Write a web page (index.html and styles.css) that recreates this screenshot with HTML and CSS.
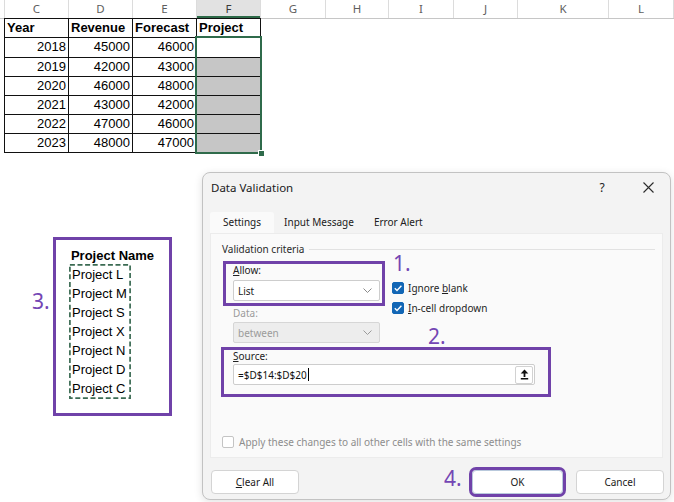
FILE: index.html
```html
<!DOCTYPE html>
<html>
<head>
<meta charset="utf-8">
<title>Data Validation</title>
<link rel="stylesheet" href="styles.css">
</head>
<body>
<div class="colheads">
  <div class="ch c0"></div>
  <div class="ch">C</div>
  <div class="ch">D</div>
  <div class="ch">E</div>
  <div class="ch sel">F</div>
  <div class="ch w65">G</div>
  <div class="ch w63">H</div>
  <div class="ch w65">I</div>
  <div class="ch">J</div>
  <div class="ch w91">K</div>
  <div class="ch w65">L</div>
  <div class="ch rest"></div>
</div>

<div class="sheet">
  <div class="cell hd">Year</div><div class="cell hd">Revenue</div><div class="cell hd">Forecast</div><div class="cell hd">Project</div>
  <div class="cell num">2018</div><div class="cell num">45000</div><div class="cell num">46000</div><div class="cell fc active"></div>
  <div class="cell num">2019</div><div class="cell num">42000</div><div class="cell num">43000</div><div class="cell fc"></div>
  <div class="cell num">2020</div><div class="cell num">46000</div><div class="cell num">48000</div><div class="cell fc"></div>
  <div class="cell num">2021</div><div class="cell num">43000</div><div class="cell num">42000</div><div class="cell fc"></div>
  <div class="cell num">2022</div><div class="cell num">47000</div><div class="cell num">46000</div><div class="cell fc"></div>
  <div class="cell num">2023</div><div class="cell num">48000</div><div class="cell num">47000</div><div class="cell fc"></div>
</div>
<div class="selection"><span class="handle"></span></div>

<div class="projbox">
  <div class="ttl">Project Name</div>
  <div class="plist">
    <svg class="dash" width="62" height="135" viewBox="0 0 62 135"><rect x="0.9" y="0.9" width="60.2" height="133.2" fill="none" stroke="#3b6b53" stroke-width="1.7" stroke-dasharray="5 2.6"/></svg>
    <div class="pi">Project L</div>
    <div class="pi">Project M</div>
    <div class="pi">Project S</div>
    <div class="pi">Project X</div>
    <div class="pi">Project N</div>
    <div class="pi">Project D</div>
    <div class="pi">Project C</div>
  </div>
</div>

<div class="dialog">
  <div class="dtitle">
    <span class="dtext">Data Validation</span>
    <div class="dctrls">
      <span class="help">?</span>
      <span class="close"><svg width="11" height="11" viewBox="0 0 11 11"><path d="M0.5 0.5 L10.5 10.5 M10.5 0.5 L0.5 10.5" stroke="#2b2b2b" stroke-width="1.1" fill="none"/></svg></span>
    </div>
  </div>
  <div class="tabs">
    <div class="tab on">Settings</div>
    <div class="tab">Input Message</div>
    <div class="tab">Error Alert</div>
  </div>
  <div class="panel">
    <div class="crit"><span>Validation criteria</span><span class="rule"></span></div>
    <div class="row1">
      <div class="leftcol">
        <div class="allow">
          <div class="lbl"><u>A</u>llow:</div>
          <div class="select"><span>List</span><svg width="9" height="5" viewBox="0 0 9 5"><polyline points="0.5,0.5 4.5,4.5 8.5,0.5" fill="none" stroke="#8a8a8a" stroke-width="1"/></svg></div>
        </div>
        <div class="lbl dis datalbl">Data:</div>
        <div class="select disabled between"><span>between</span><svg width="9" height="5" viewBox="0 0 9 5"><polyline points="0.5,0.5 4.5,4.5 8.5,0.5" fill="none" stroke="#9a9a9a" stroke-width="1"/></svg></div>
      </div>
      <div class="checks">
        <div class="chk"><span class="box on"><svg width="12" height="12" viewBox="0 0 12 12"><polyline points="2.8,6.2 5,8.4 9.4,3.8" fill="none" stroke="#fff" stroke-width="1.4"/></svg></span><span>Ignore <u>b</u>lank</span></div>
        <div class="chk"><span class="box on"><svg width="12" height="12" viewBox="0 0 12 12"><polyline points="2.8,6.2 5,8.4 9.4,3.8" fill="none" stroke="#fff" stroke-width="1.4"/></svg></span><span><u>I</u>n-cell dropdown</span></div>
      </div>
    </div>
    <div class="source">
      <div class="lbl"><u>S</u>ource:</div>
      <div class="input">
        <span class="val">=$D$14:$D$20</span><span class="caret"></span>
        <span class="upbtn"><svg width="9" height="11" viewBox="0 0 9 11"><polygon points="4.5,0.5 8.3,4.6 0.7,4.6" fill="#111"/><rect x="3.6" y="4" width="1.8" height="4" fill="#111"/><rect x="0.8" y="9" width="7.4" height="1.5" fill="#111"/></svg></span>
      </div>
    </div>
    <div class="apply"><span class="box"></span><span>Apply these changes to all other cells with the same settings</span></div>
  </div>
  <div class="footer">
    <div class="btn w88"><u>C</u>lear All</div>
    <div class="btn ok">OK</div>
    <div class="btn w88">Cancel</div>
  </div>
</div>

<div class="anno a1">1.</div>
<div class="anno a2">2.</div>
<div class="anno a3">3.</div>
<div class="anno a4">4.</div>
</body>
</html>
```

FILE: styles.css
```css
* { box-sizing: border-box; }
html, body { margin: 0; padding: 0; }
body {
  width: 674px;
  height: 502px;
  overflow: hidden;
  position: relative;
  background: #ffffff;
  font-family: "Liberation Sans", Arial, sans-serif;
  color: #000;
}

/* column headers */
.colheads {
  display: flex;
  height: 19px;
  border-bottom: 1px solid #c6c6c6;
}
.ch {
  flex: none;
  width: 64px;
  border-right: 1px solid #dcdcdc;
  font-family: "Noto Sans", sans-serif;
  font-size: 11.5px;
  line-height: 18px;
  color: #5e5e5e;
  text-align: center;
}
.ch.c0 { width: 5px; }
.ch.w65 { width: 65px; }
.ch.w63 { width: 63px; }
.ch.w91 { width: 91px; }
.ch.rest { flex: 1; border-right: none; }
.ch.sel {
  background: #e2e2e2;
  color: #3a3a3a;
  box-shadow: inset 0 -2px 0 #2d6a48;
}

/* data table */
.sheet {
  display: grid;
  grid-template-columns: repeat(4, 64px);
  grid-template-rows: 19px 20px 19px 19px 19px 19px 19px;
  width: 257px;
  margin: -1px 0 0 4px;
  border-left: 1px solid #111;
  border-top: 1px solid #111;
}
.cell {
  border-right: 1px solid #111;
  border-bottom: 1px solid #111;
  font-size: 13px;
  line-height: 18px;
  padding: 0 2px;
  white-space: nowrap;
  overflow: hidden;
}
.cell.hd { font-weight: bold; }
.cell.num { text-align: right; }
.cell.fc { background: #c6c6c6; }
.cell.fc.active { background: #ffffff; }

.selection {
  position: absolute;
  left: 195px;
  top: 36px;
  width: 67px;
  height: 118px;
  border: 2px solid #2f6b4b;
}
.handle {
  position: absolute;
  right: -5px;
  bottom: -5px;
  width: 7px;
  height: 7px;
  background: #2f6b4b;
  border: 1px solid #fff;
}

/* project name box */
.projbox {
  position: absolute;
  left: 53px;
  top: 237px;
  width: 119px;
  height: 179px;
  border: 3px solid #7042a9;
  background: #fff;
  padding-top: 6px;
}
.projbox .ttl {
  font-weight: bold;
  font-size: 13px;
  line-height: 19px;
  text-align: center;
}
.plist {
  position: relative;
  width: 62px;
  margin: -1px 0 0 13px;
  padding: 1px 0 1px 3px;
}
.plist .dash {
  position: absolute;
  left: 0;
  top: 0;
}
.pi {
  font-size: 13px;
  line-height: 19px;
  white-space: nowrap;
}

/* dialog */
.dialog {
  position: absolute;
  left: 202px;
  top: 172px;
  width: 469px;
  height: 328px;
  background: #f3f3f3;
  border: 1px solid #c2c2c2;
  border-radius: 8px;
  box-shadow: 0 2px 8px rgba(0,0,0,0.12);
  font-family: "Noto Sans", "Open Sans", sans-serif;
  font-size: 10px;
  color: #1f1f1f;
  display: flex;
  flex-direction: column;
}
.dtitle {
  height: 28px;
  display: flex;
  align-items: center;
  padding: 0 12px 0 8px;
}
.dtext { font-size: 11.5px; color: #1a1a1a; }
.dctrls {
  margin-left: auto;
  display: flex;
  gap: 26px;
  align-items: center;
}
.help, .close {
  width: 20px;
  display: flex;
  justify-content: center;
  align-items: center;
  font-size: 12px;
  color: #222;
}
.tabs {
  display: flex;
  margin-top: 11px;
  height: 21px;
  padding-left: 7px;
}
.tab {
  padding: 0 10px;
  line-height: 21px;
  color: #202020;
}
.tab.on {
  background: #fafafa;
  padding: 0 13px;
  border-radius: 3px 3px 0 0;
}
.panel {
  margin-left: 7px;
  width: 453px;
  height: 225px;
  background: #fafafa;
  border: 1px solid #ececec;
  padding: 8px 0 9px 11px;
  display: flex;
  flex-direction: column;
}
.crit {
  display: flex;
  align-items: center;
  height: 14px;
  line-height: 14px;
  color: #2a2a2a;
}
.crit .rule {
  flex: 1;
  height: 1px;
  background: #e2e2e2;
  margin: 0 7px 0 5px;
}
.row1 {
  display: flex;
  margin-top: 5px;
}
.leftcol {
  display: flex;
  flex-direction: column;
}
.lbl {
  height: 12px;
  line-height: 12px;
  color: #222;
}
.lbl.dis { color: #9b9b9b; }
.allow {
  margin-left: 1px;
  width: 162px;
  border: 3px solid #7042a9;
  padding: 0 2px 2px 7px;
}
.select {
  margin-top: 4px;
  width: 147px;
  height: 21px;
  background: #fff;
  border: 1px solid #cdcdcd;
  border-radius: 2px;
  display: flex;
  align-items: center;
  justify-content: space-between;
  padding: 0 7px 0 4px;
  color: #1a1a1a;
}
.select.disabled {
  background: #ededed;
  color: #9b9b9b;
  border-color: #d6d6d6;
}
.datalbl { margin: 1px 0 0 11px; }
.between { margin: 3px 0 0 11px; }
.checks {
  margin-left: 7px;
  padding-top: 17px;
}
.chk {
  height: 20px;
  display: flex;
  align-items: center;
  white-space: nowrap;
  color: #1f1f1f;
}
.box {
  width: 12px;
  height: 12px;
  border: 1px solid #c4c4c4;
  border-radius: 2px;
  background: #fff;
  margin-right: 4px;
  display: flex;
  flex: none;
}
.box.on {
  background: #1266b5;
  border-color: #1266b5;
}
.box.on svg { margin: -1px; }
.source {
  margin: 4px 0 0 -1px;
  width: 330px;
  border: 3px solid #7042a9;
  padding: 0 13px 9px 9px;
}
.input {
  margin-top: 2px;
  height: 21px;
  background: #fff;
  border: 1px solid #cdcdcd;
  border-radius: 2px;
  display: flex;
  align-items: center;
  padding: 0 1px 0 4px;
  color: #111;
}
.caret {
  width: 1px;
  height: 13px;
  background: #000;
  margin-left: 1px;
}
.upbtn {
  margin-left: auto;
  width: 18px;
  height: 18px;
  background: #fff;
  border: 1px solid #d2d2d2;
  border-radius: 2px;
  display: flex;
  align-items: center;
  justify-content: center;
}
.apply {
  margin-top: auto;
  height: 12px;
  display: flex;
  align-items: center;
  color: #8d8d8d;
  white-space: nowrap;
}
.apply .box { margin-right: 5px; }
.footer {
  display: flex;
  margin-top: 12px;
  padding: 0 6px 0 8px;
  gap: 13px;
}
.btn {
  height: 24px;
  line-height: 22px;
  background: #fff;
  border: 1px solid #d4d4d4;
  border-radius: 4px;
  text-align: center;
  color: #1a1a1a;
}
.btn.w88 { width: 88px; }
.btn.w88:first-child { margin-right: auto; }
.btn.ok {
  width: 91px;
  border-color: #b9c9dc;
  outline: 3px solid #7042a9;
  outline-offset: 0;
}

/* annotations */
.anno {
  position: absolute;
  font-family: "Noto Sans", sans-serif;
  font-size: 21px;
  line-height: 21px;
  color: #7446b4;
}
.a1 { left: 393px; top: 253px; }
.a2 { left: 428px; top: 326px; }
.a3 { left: 32px; top: 291px; }
.a4 { left: 444px; top: 468px; }
```
